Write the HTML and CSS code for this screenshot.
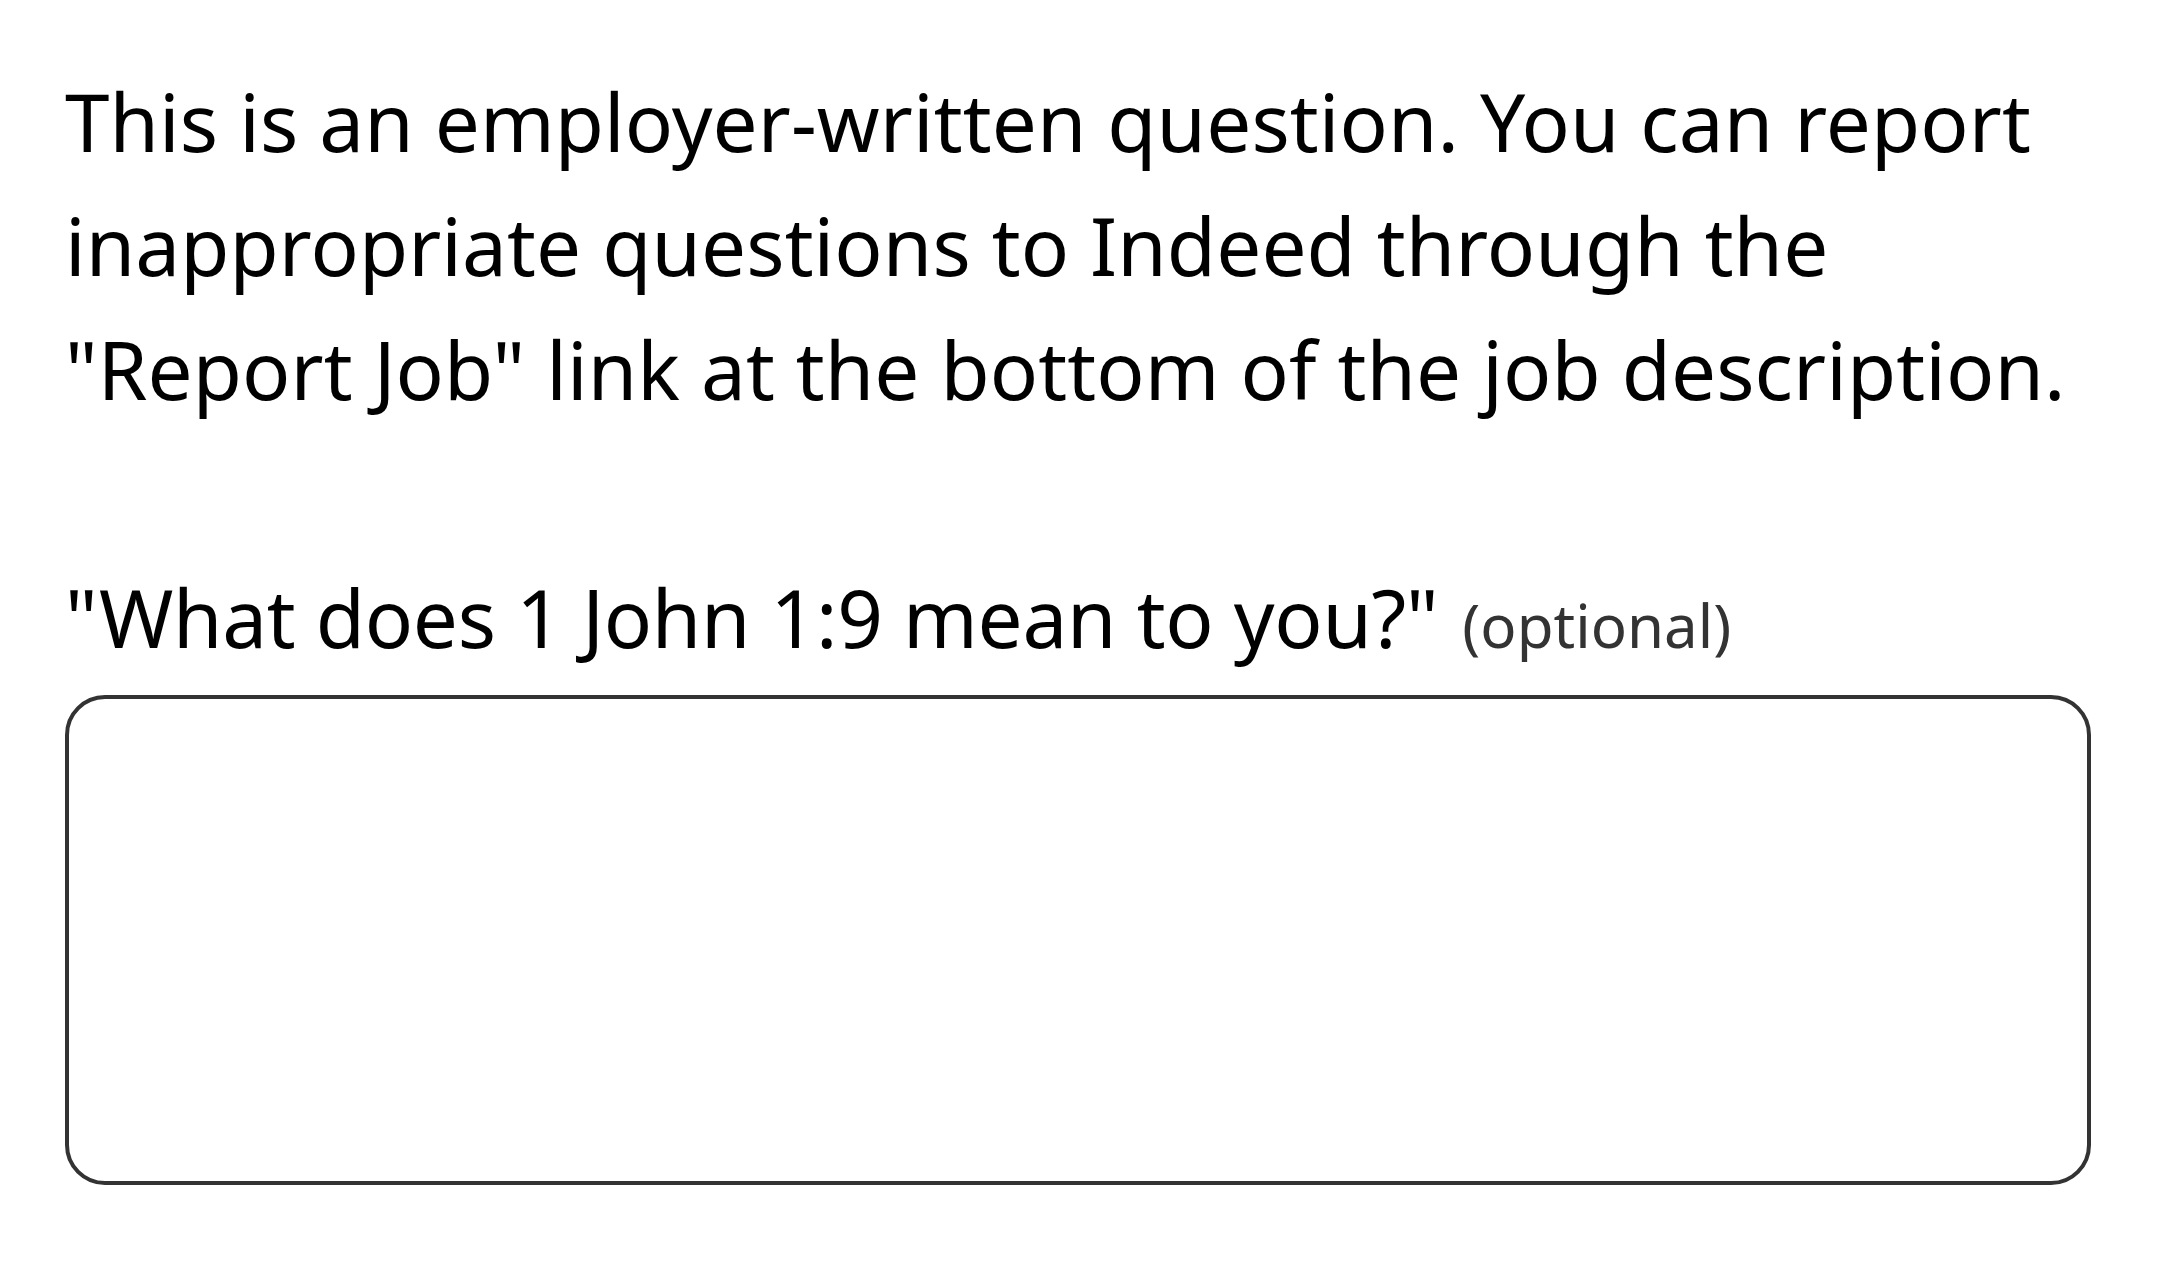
FILE: index.html
```html
<!DOCTYPE html>
<html>
<head>
  <meta name="viewport" content="width=device-width, initial-scale=1.0">
  <title>Application questions</title>
  <link rel="stylesheet" href="styles.css">
</head>
<body>
  <main class="question-page">
    <p class="notice">
      This is an employer-written question. You can report inappropriate questions to Indeed through the <span class="nowrap">"Report Job"</span> link at the bottom of the job description.
    </p>

    <label class="question" for="answer">
      <span class="question-text">"What does 1 John 1:9 mean to you?"</span>
      <span class="optional">(optional)</span>
    </label>
    <textarea id="answer" class="answer"></textarea>
  </main>
</body>
</html>
```

FILE: styles.css
```css
body {
  font-family: "Noto Sans", "Open Sans", sans-serif;
  margin: 0;
  padding: 0;
  background-color: #ffffff;
  color: #000000;
}

.question-page {
  padding: 59px 72px 0 65px;
}

.notice {
  margin: 0;
  font-size: 80px;
  line-height: 124px;
  letter-spacing: 0.1px;
}

/* keep the link label on one line */
.nowrap {
  white-space: nowrap;
}

.question {
  display: flex;
  align-items: baseline;
  gap: 24px;
  margin-top: 124px;
  line-height: 124px;
}

.question-text {
  font-size: 80px;
  letter-spacing: -0.3px;
}

.optional {
  font-size: 60px;
  color: #333333;
}

.answer {
  display: block;
  box-sizing: border-box;
  width: 100%;
  height: 490px;
  margin-top: 8px;
  border: 4px solid #333333;
  border-radius: 40px;
  resize: none;
  outline: none;
}
```
